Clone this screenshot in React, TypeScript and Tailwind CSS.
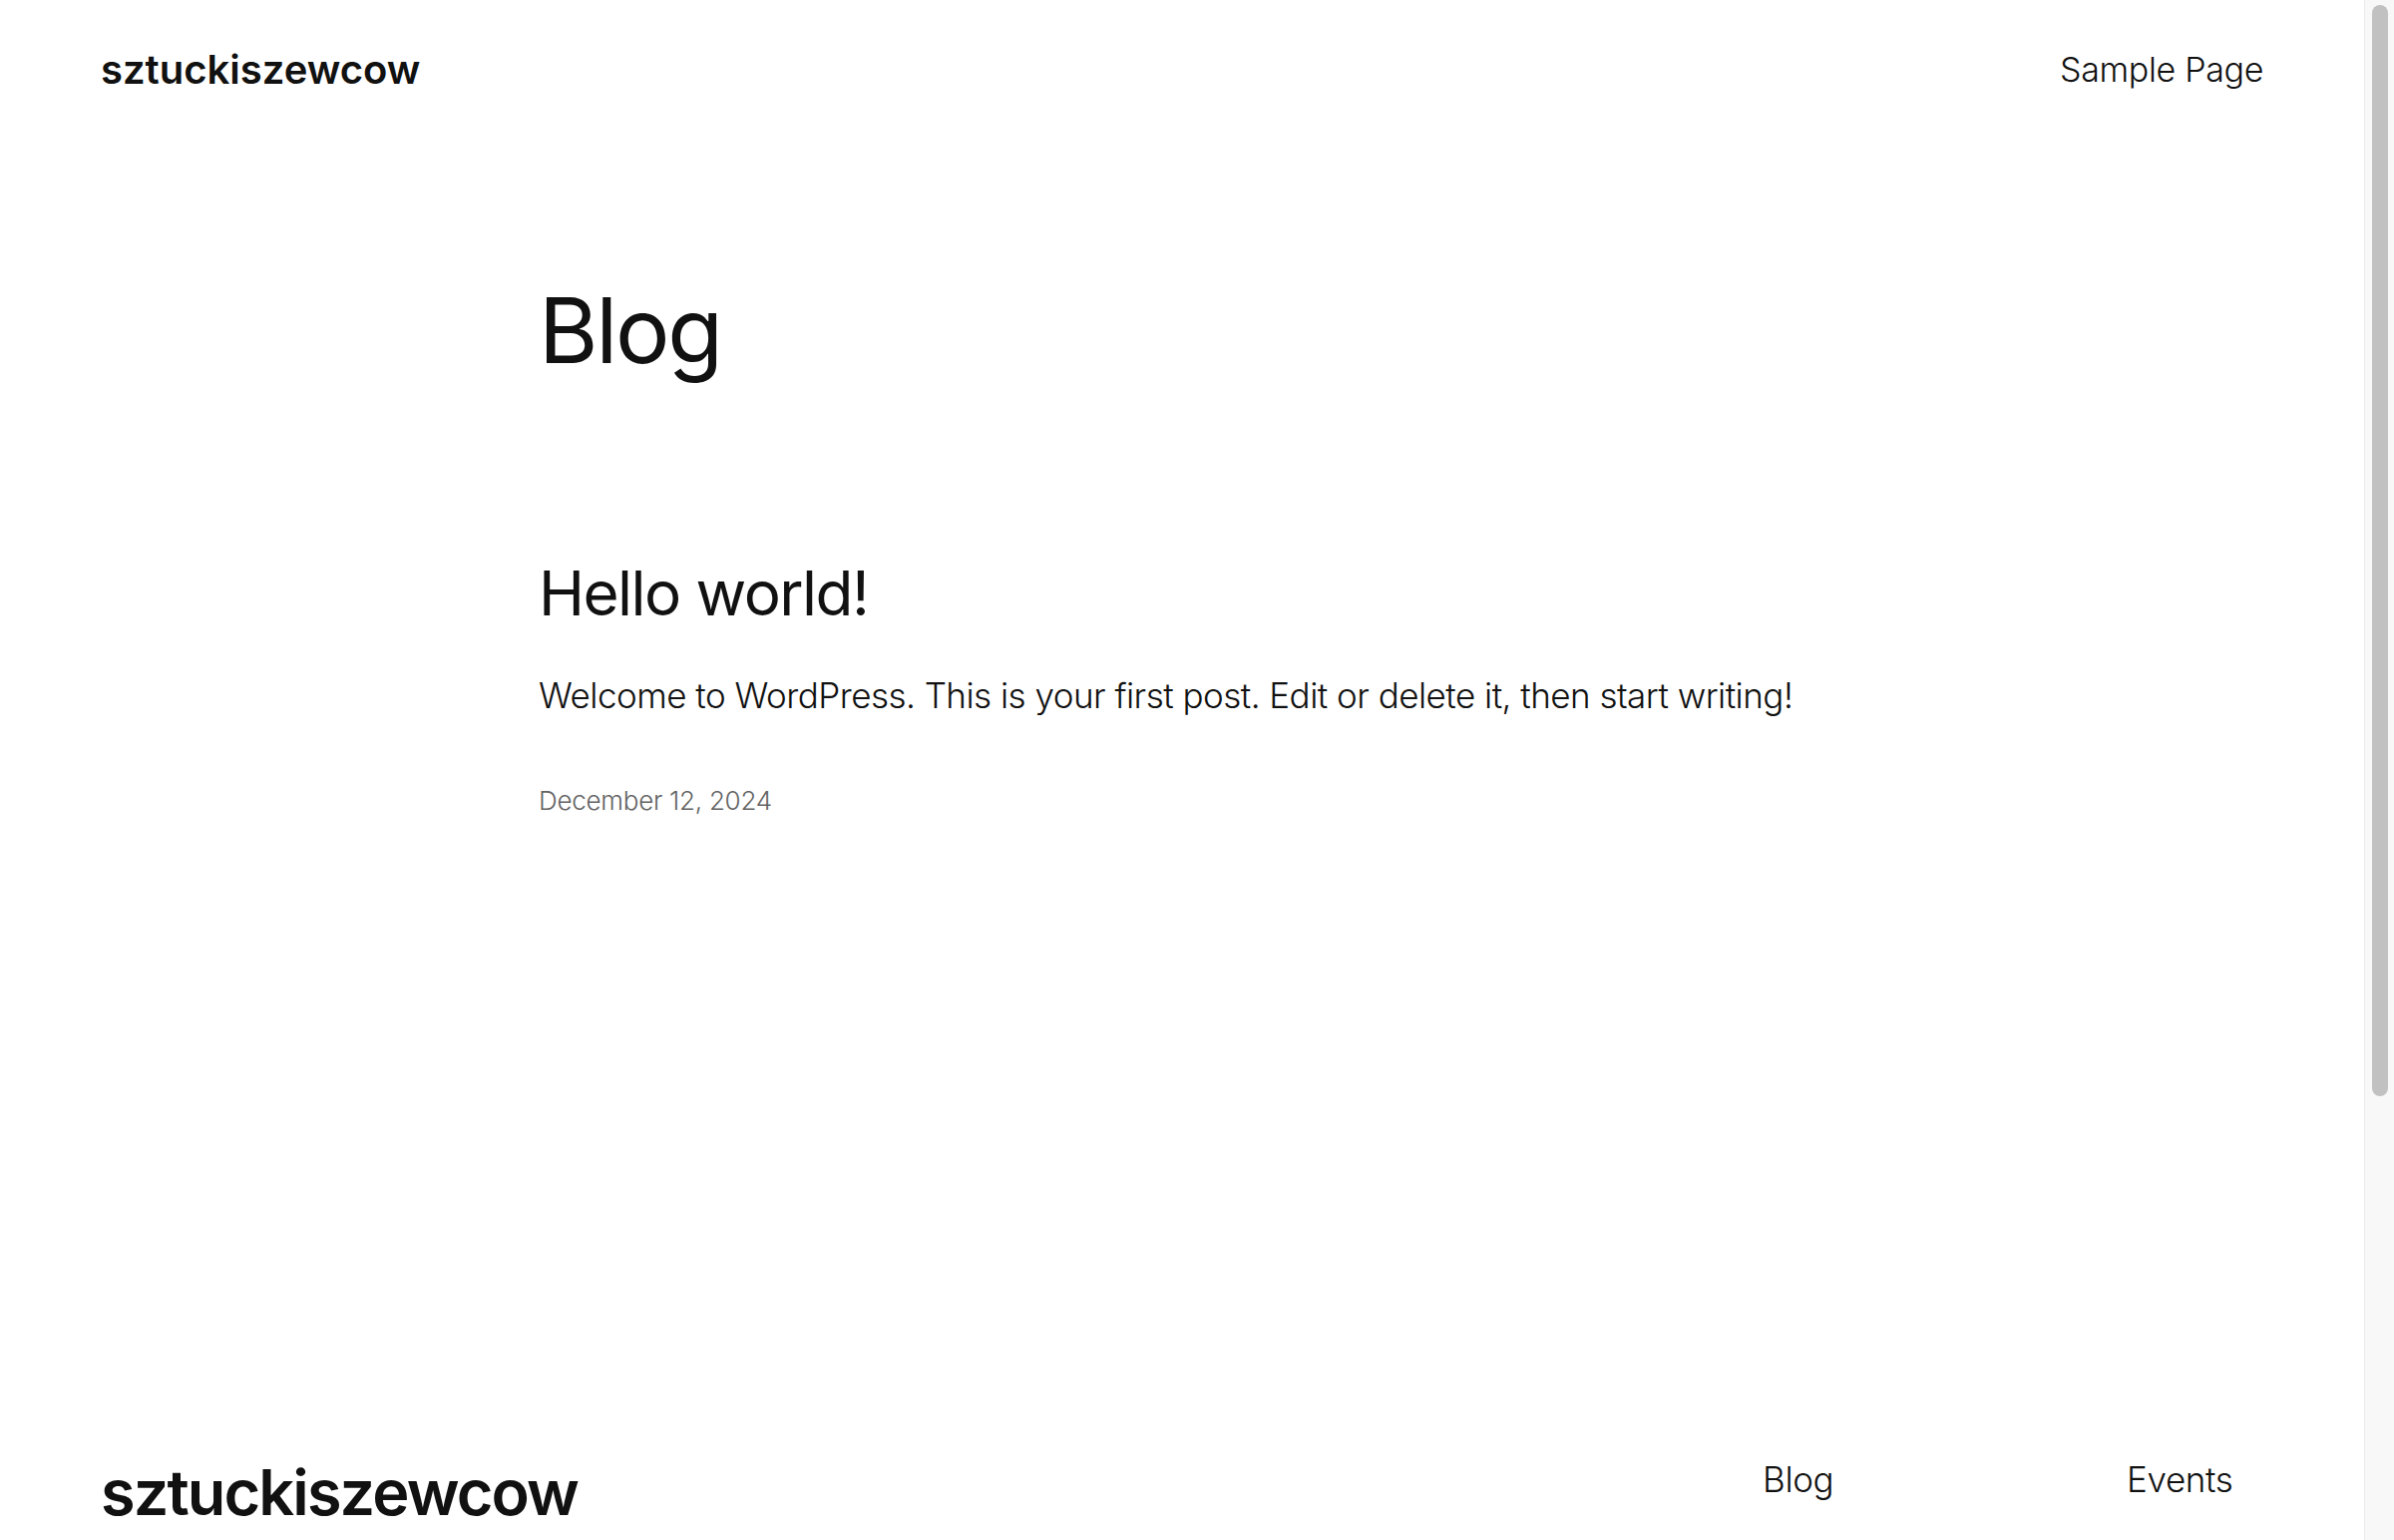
export default function App() {
  return (
    <div
      className="flex h-screen overflow-hidden bg-white text-[#111111]"
      style={{ fontFamily: "Inter, 'Noto Sans', sans-serif" }}
    >
      <div className="min-w-0 flex-1">
        {/* Header */}
        <header className="flex h-[140px] items-center justify-between px-[101px]">
          <a href="#" className="text-[40px] font-semibold leading-none tracking-[0em]">
            sztuckiszewcow
          </a>
          <nav>
            <a href="#" className="text-[34px] font-light leading-none tracking-[-0.01em]">
              Sample Page
            </a>
          </nav>
        </header>

        {/* Main */}
        <main className="mx-auto w-[1290px] pt-[136px] pb-[641px]">
          <h1 className="text-[91px] font-normal leading-[1.22] tracking-[-0.025em]">Blog</h1>

          <article className="mt-[170px]">
            <h2 className="text-[62px] font-normal leading-[1.22] tracking-[-0.025em]">
              <a href="#">Hello world!</a>
            </h2>
            <p className="mt-[43px] text-[35px] font-light leading-[1.2] tracking-[-0.015em]">
              Welcome to WordPress. This is your first post. Edit or delete it, then start writing!
            </p>
            <div className="mt-[69px] text-[26px] font-light leading-[1.2] tracking-[-0.01em] text-[#636363]">
              December 12, 2024
            </div>
          </article>
        </main>

        {/* Footer */}
        <footer className="flex items-start justify-between px-[101px] pt-[1px] pb-[650px]">
          <a href="#" className="text-[63px] font-semibold leading-[1.15] tracking-[-0.03em]">
            sztuckiszewcow
          </a>
          <div className="flex pt-[2px]">
            <div className="w-[365px]">
              <a href="#" className="text-[35px] font-light leading-[1.2] tracking-[-0.01em]">
                Blog
              </a>
            </div>
            <div className="w-[137px]">
              <a href="#" className="text-[35px] font-light leading-[1.2] tracking-[-0.01em]">
                Events
              </a>
            </div>
          </div>
        </footer>
      </div>

      {/* Scrollbar */}
      <div className="w-[30px] shrink-0 border-l border-[#e8e8e8] bg-[#f8f8f8] pt-[5px] pl-[7px]">
        <div className="h-[1094px] w-[16px] rounded-full bg-[#c1c1c1]" />
      </div>
    </div>
  )
}
